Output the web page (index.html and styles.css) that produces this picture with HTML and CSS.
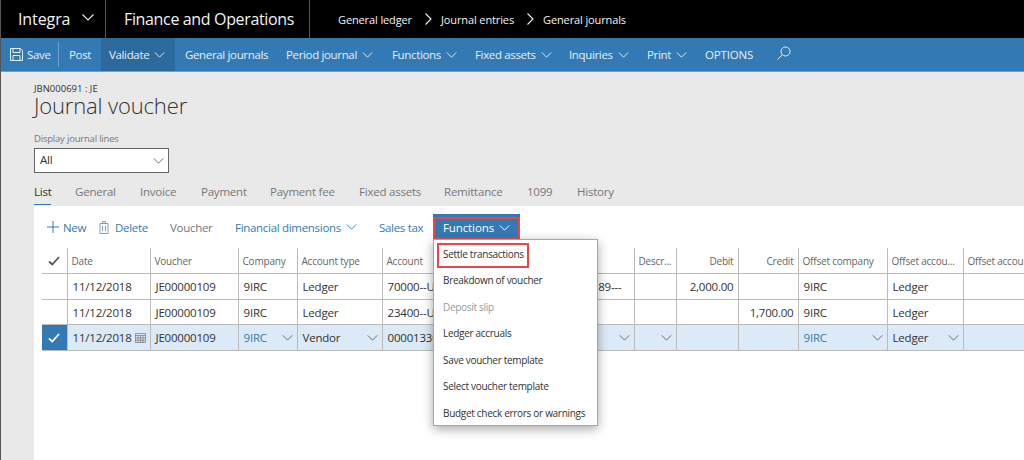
FILE: index.html
```html
<!DOCTYPE html>
<html lang="en">
<head>
    <meta charset="UTF-8">
    <meta name="viewport" content="width=device-width, initial-scale=1.0">
    <title>Journal voucher</title>
    <link rel="stylesheet" href="styles.css">
</head>
<body>
    <svg class="icon-defs" width="0" height="0">
        <symbol id="chev" viewBox="0 0 12 7"><path d="M.5.5 6 6 11.500.5" fill="none" stroke="currentColor" stroke-width="1.100"/></symbol>
    </svg>
    <div id="app">
        <div class="topbar">
            <div class="top-cell brand">Integra <svg class="chev-top"><use href="#chev"/></svg></div>
            <div class="top-cell product">Finance and Operations</div>
            <div class="crumbs">
                <span>General ledger</span>
                <svg class="crumb-sep" viewBox="0 0 7 12"><path d="M.5.5 6 6 .5 11.500" fill="none" stroke="currentColor" stroke-width="1.100"/></svg>
                <span>Journal entries</span>
                <svg class="crumb-sep" viewBox="0 0 7 12"><path d="M.5.5 6 6 .5 11.500" fill="none" stroke="currentColor" stroke-width="1.100"/></svg>
                <span>General journals</span>
            </div>
        </div>

        <div class="actionbar">
            <div class="act act-save">
                <svg class="save-icon" viewBox="0 0 13 13"><path d="M.5.5h10l2 2v10H.5z M3 .5v4h7v-4 M3 12.500v-5h7v5" fill="none" stroke="currentColor"/></svg>
                Save
            </div>
            <div class="act act-post">Post</div>
            <div class="act act-validate">Validate <svg class="chev"><use href="#chev"/></svg></div>
            <div class="act act-gj">General journals</div>
            <div class="act act-pj">Period journal <svg class="chev"><use href="#chev"/></svg></div>
            <div class="act act-fn">Functions <svg class="chev"><use href="#chev"/></svg></div>
            <div class="act act-fa">Fixed assets <svg class="chev"><use href="#chev"/></svg></div>
            <div class="act act-inq">Inquiries <svg class="chev"><use href="#chev"/></svg></div>
            <div class="act act-print">Print <svg class="chev"><use href="#chev"/></svg></div>
            <div class="act act-opt">OPTIONS</div>
            <svg class="search-icon" viewBox="0 0 14 14"><circle cx="8.500" cy="5.500" r="4.500" fill="none" stroke="currentColor"/><path d="M5.300 8.700.5 13.500" stroke="currentColor" fill="none"/></svg>
        </div>

        <div class="page">
            <div class="caption">JBN000691 : JE</div>
            <h1>Journal voucher</h1>
            <label class="field-label">Display journal lines</label>
            <div class="select"><span class="select-value">All</span> <svg class="chev-dark"><use href="#chev"/></svg></div>

            <div class="tabs">
                <span class="tab active">List</span>
                <span class="tab t-gen">General</span>
                <span class="tab t-inv">Invoice</span>
                <span class="tab t-pay">Payment</span>
                <span class="tab t-fee">Payment fee</span>
                <span class="tab t-fa">Fixed assets</span>
                <span class="tab t-rem">Remittance</span>
                <span class="tab t-1099">1099</span>
                <span class="tab">History</span>
            </div>

            <div class="panel">
                <div class="toolbar">
                    <span class="tool t-new"><svg class="plus-icon" viewBox="0 0 12 12"><path d="M6 0v12M0 6h12" stroke="currentColor" fill="none"/></svg>New</span>
                    <span class="tool t-del"><svg class="trash-icon" viewBox="0 0 10 13"><path d="M1 2.500h8v10H1z M3.500 2.500V.5h3v2 M3.500 5v5M6.500 5v5" stroke="#7f9fbd" fill="none"/></svg>Delete</span>
                    <span class="tool t-vou">Voucher</span>
                    <span class="tool t-fin">Financial dimensions <svg class="chev-blue"><use href="#chev"/></svg></span>
                    <span class="tool t-tax">Sales tax</span>
                    <span class="tool t-func">Functions <svg class="chev"><use href="#chev"/></svg></span>
                </div>

                <table class="grid">
                    <colgroup>
                        <col class="c-check"><col class="c-date"><col class="c-voucher"><col class="c-company"><col class="c-type">
                        <col class="c-account"><col class="c-descr"><col class="c-debit"><col class="c-credit">
                        <col class="c-ocomp"><col class="c-oacc"><col class="c-olast">
                    </colgroup>
                    <thead>
                        <tr>
                            <th class="check-head"><svg class="tick" viewBox="0 0 12 10"><path d="M1 5.500 4.300 8.500 11 1" fill="none" stroke="#555" stroke-width="1.800"/></svg></th>
                            <th>Date</th><th>Voucher</th><th>Company</th><th>Account type</th><th>Account</th>
                            <th>Descr...</th><th class="num">Debit</th><th class="num">Credit</th>
                            <th>Offset company</th><th>Offset accou...</th><th>Offset account</th>
                        </tr>
                    </thead>
                    <tbody>
                        <tr>
                            <td></td><td>11/12/2018</td><td>JE00000109</td><td>9IRC</td><td>Ledger</td>
                            <td class="acct">70000--U<span class="acct-end">89---</span></td><td></td><td class="num">2,000.00</td><td></td>
                            <td>9IRC</td><td>Ledger</td><td></td>
                        </tr>
                        <tr class="short">
                            <td></td><td>11/12/2018</td><td>JE00000109</td><td>9IRC</td><td>Ledger</td>
                            <td>23400--U</td><td></td><td></td><td class="num">1,700.00</td>
                            <td>9IRC</td><td>Ledger</td><td></td>
                        </tr>
                        <tr class="selected">
                            <td class="check-on"><svg class="tick" viewBox="0 0 12 10"><path d="M1 5.500 4.300 8.500 11 1" fill="none" stroke="#fff" stroke-width="1.800"/></svg></td>
                            <td><div class="cell-flex">11/12/2018
                                <svg class="cal-icon" viewBox="0 0 11 11"><path d="M.5 1.500h10v9H.5z M.5 3.500h10 M3 3.500v7M5.500 3.500v7M8 3.500v7M.5 6h10M.5 8.300h10" fill="none" stroke="#777" stroke-width=".7"/></svg></div></td>
                            <td>JE00000109</td>
                            <td><div class="cell-flex link">9IRC <svg class="chev-cell"><use href="#chev"/></svg></div></td>
                            <td><div class="cell-flex">Vendor <svg class="chev-cell"><use href="#chev"/></svg></div></td>
                            <td><div class="cell-flex">00001330 <svg class="chev-cell"><use href="#chev"/></svg></div></td>
                            <td><div class="cell-flex end"><svg class="chev-cell"><use href="#chev"/></svg></div></td>
                            <td></td><td></td>
                            <td><div class="cell-flex link">9IRC <svg class="chev-cell"><use href="#chev"/></svg></div></td>
                            <td><div class="cell-flex">Ledger <svg class="chev-cell"><use href="#chev"/></svg></div></td>
                            <td></td>
                        </tr>
                    </tbody>
                </table>

                <div class="menu">
                    <div class="menu-item boxed">Settle transactions</div>
                    <div class="menu-item">Breakdown of voucher</div>
                    <div class="menu-item disabled">Deposit slip</div>
                    <div class="menu-item">Ledger accruals</div>
                    <div class="menu-item">Save voucher template</div>
                    <div class="menu-item">Select voucher template</div>
                    <div class="menu-item">Budget check errors or warnings</div>
                </div>
            </div>
        </div>
    </div>
</body>
</html>
```

FILE: styles.css
```css
html, body {
    margin: 0;
    padding: 0;
    height: 460px;
    overflow: hidden;
}
body {
    font-family: "Open Sans", "Noto Sans", sans-serif;
    font-size: 11px;
    letter-spacing: -0.2px;
    color: #333;
    background: #e9e9e9;
}
.icon-defs {
    display: block;
    height: 0;
}
#app {
    height: 460px;
    display: flex;
    flex-direction: column;
    border-left: 1px solid #555;
}
svg {
    display: block;
    flex: none;
}

/* top bar */
.topbar {
    height: 38px;
    background: #000;
    color: #f2f2f2;
    display: flex;
    align-items: center;
    flex: none;
}
.top-cell {
    height: 38px;
    display: flex;
    align-items: center;
    border-right: 1px solid #555;
    font-size: 16px;
    letter-spacing: -0.35px;
    box-sizing: border-box;
}
.brand {
    width: 105px;
    padding-left: 17px;
    letter-spacing: -0.1px;
}
.chev-top {
    width: 12px;
    height: 7px;
    margin-left: 12px;
    margin-top: -4px;
}
.product {
    width: 204px;
    padding-left: 18px;
}
.crumbs {
    display: flex;
    align-items: center;
    padding-left: 28px;
    font-size: 11px;
    letter-spacing: -0.12px;
}
.crumb-sep {
    width: 7px;
    height: 12px;
    margin: 0 9px 0 13px;
}

/* action bar */
.actionbar {
    height: 33px;
    background: #337ab5;
    border-bottom: 1px solid #6f9fc8;
    color: #e6eef6;
    display: flex;
    align-items: stretch;
    flex: none;
    position: relative;
    font-size: 11.500px;
    letter-spacing: -0.35px;
}
.act {
    display: flex;
    align-items: center;
    white-space: nowrap;
}
.chev, .chev-blue, .chev-dark, .chev-cell {
    width: 11px;
    height: 6px;
    margin-left: 5px;
}
.save-icon {
    width: 13px;
    height: 13px;
    margin-right: 4px;
}
.act-save {
    width: 58px;
    padding-left: 9px;
    box-sizing: border-box;
    position: relative;
}
.act-save::after {
    content: "";
    position: absolute;
    right: 0;
    top: 4px;
    bottom: 4px;
    width: 1px;
    background: #6f9fc8;
}
.act-post {
    width: 42px;
    padding-left: 10px;
    box-sizing: border-box;
}
.act-validate {
    width: 74px;
    padding-left: 8px;
    box-sizing: border-box;
    background: #2c6a9e;
}
.act-gj {
    width: 111px;
    padding-left: 10px;
    box-sizing: border-box;
}
.act-pj { width: 106px; }
.act-fn { width: 83px; }
.act-fa { width: 94px; }
.act-inq { width: 78px; }
.act-print { width: 58px; }
.act-opt { width: 72px; letter-spacing: -0.15px; }
.search-icon {
    width: 14px;
    height: 14px;
    margin-top: 8px;
}

/* page header */
.page {
    flex: 1;
    padding-top: 12px;
    display: flex;
    flex-direction: column;
    min-height: 0;
}
.caption {
    margin-left: 33px;
    font-size: 9.500px;
    letter-spacing: 0;
    line-height: 10px;
}
h1 {
    margin: -2px 0 0 33px;
    font-size: 22px;
    font-weight: 300;
    line-height: 26px;
    letter-spacing: -0.15px;
    color: #333;
}
.field-label {
    margin: 14px 0 0 33px;
    font-size: 9.500px;
    line-height: 13px;
    color: #777;
}
.select {
    margin: 3px 0 0 33px;
    width: 135px;
    height: 25px;
    box-sizing: border-box;
    border: 1px solid #666;
    background: #fff;
    display: flex;
    align-items: center;
    justify-content: space-between;
    padding: 0 4px 0 5px;
    font-size: 11.500px;
}
.select-value {
    margin-top: -2px;
}
.chev-dark {
    color: #666;
}

/* tabs */
.tabs {
    margin: 9px 0 0 33px;
    height: 34px;
    display: flex;
    align-items: flex-start;
    font-size: 11.500px;
    letter-spacing: -0.22px;
    color: #777;
    flex: none;
}
.tab {
    line-height: 20px;
}
.tab.active {
    color: #333;
    width: 17px;
    border-bottom: 1px solid #337ab5;
    margin-right: 24px;
    height: 22px;
}
.t-gen { width: 65px; }
.t-inv { width: 61px; }
.t-pay { width: 69px; }
.t-fee { width: 89px; }
.t-fa { width: 85px; }
.t-rem { width: 83px; }
.t-1099 { width: 50px; }

/* white panel */
.panel {
    flex: 1;
    margin: -10px 0 0 33px;
    background: #fff;
    position: relative;
    overflow: hidden;
    min-height: 0;
}
.toolbar {
    height: 42px;
    display: flex;
    align-items: center;
    font-size: 11.500px;
    letter-spacing: -0.3px;
    color: #337ab5;
    padding-left: 13px;
}
.tool {
    display: flex;
    align-items: center;
    white-space: nowrap;
}
.plus-icon {
    width: 12px;
    height: 12px;
    margin-right: 4px;
}
.trash-icon {
    width: 10px;
    height: 13px;
    margin-right: 6px;
}
.t-new { width: 52px; }
.t-del { width: 71px; }
.t-vou { width: 65px; color: #777; }
.t-fin { width: 144px; }
.t-tax { width: 54px; }
.t-func {
    width: 87px;
    height: 22px;
    box-sizing: border-box;
    justify-content: center;
    margin-top: 1px;
    background: #337ab5;
    color: #fff;
    border: 2px solid #e8474a;
    box-shadow: 0 -3px 0 #337ab5;
    letter-spacing: -0.1px;
}

/* grid */
.grid {
    margin-left: 8px;
    border-collapse: collapse;
    table-layout: fixed;
    width: 1081px;
    background: #fff;
}
.c-check { width: 25px; }
.c-date { width: 83px; }
.c-voucher { width: 88px; }
.c-company { width: 59px; }
.c-type { width: 85px; }
.c-account { width: 252px; }
.c-descr { width: 42px; }
.c-debit { width: 62px; }
.c-credit { width: 60px; }
.c-ocomp { width: 89px; }
.c-oacc { width: 76px; }
.c-olast { width: 160px; }
th {
    height: 25px;
    padding: 0 0 0 4px;
    font-size: 10px;
    font-weight: 400;
    color: #666;
    text-align: left;
    white-space: nowrap;
    overflow: hidden;
    border-left: 1px solid #bbb;
    border-bottom: 1px solid #bbb;
}
th:first-child, td:first-child {
    border-left: none;
}
td {
    height: 26px;
    padding: 0 4px 0 5px;
    font-size: 11.500px;
    color: #333;
    white-space: nowrap;
    overflow: hidden;
    border-left: 1px solid #bbb;
    border-bottom: 1px solid #bbb;
    box-sizing: border-box;
}
.short td {
    height: 25px;
}
th.num, td.num {
    text-align: right;
    padding-right: 4px;
}
.check-head .tick, .check-on .tick {
    width: 12px;
    height: 10px;
    margin: auto;
}
.check-head {
    padding: 0;
}
td.check-on {
    background: #337ab5;
    padding: 0;
}
.selected td {
    background: #dce9f6;
}
.selected td.check-on {
    background: #337ab5;
}
.cell-flex {
    display: flex;
    align-items: center;
    justify-content: space-between;
}
.cell-flex.end {
    justify-content: flex-end;
}
.link {
    color: #337ab5;
}
.chev-cell {
    color: #666;
}
.cal-icon {
    width: 11px;
    height: 11px;
}
.acct {
    position: relative;
}
.acct-end {
    position: absolute;
    right: 12px;
    top: 5px;
}

/* dropdown */
.menu {
    position: absolute;
    left: 399px;
    top: 33px;
    width: 165px;
    height: 187px;
    box-sizing: border-box;
    padding-top: 1px;
    background: #fff;
    border: 1px solid #a6a6a6;
    box-shadow: 0 3px 10px rgba(0, 0, 0, 0.35);
}
.menu-item {
    height: 26.500px;
    line-height: 24px;
    padding-left: 9px;
    font-size: 10px;
    letter-spacing: -0.3px;
    color: #333;
    white-space: nowrap;
}
.menu-item.disabled {
    color: #999;
}
.menu-item.boxed {
    width: 92px;
    height: 25px;
    line-height: 18px;
    margin: 2px 0 0 3px;
    padding-left: 4px;
    box-sizing: border-box;
    border: 2px solid #e8474a;
}
```
